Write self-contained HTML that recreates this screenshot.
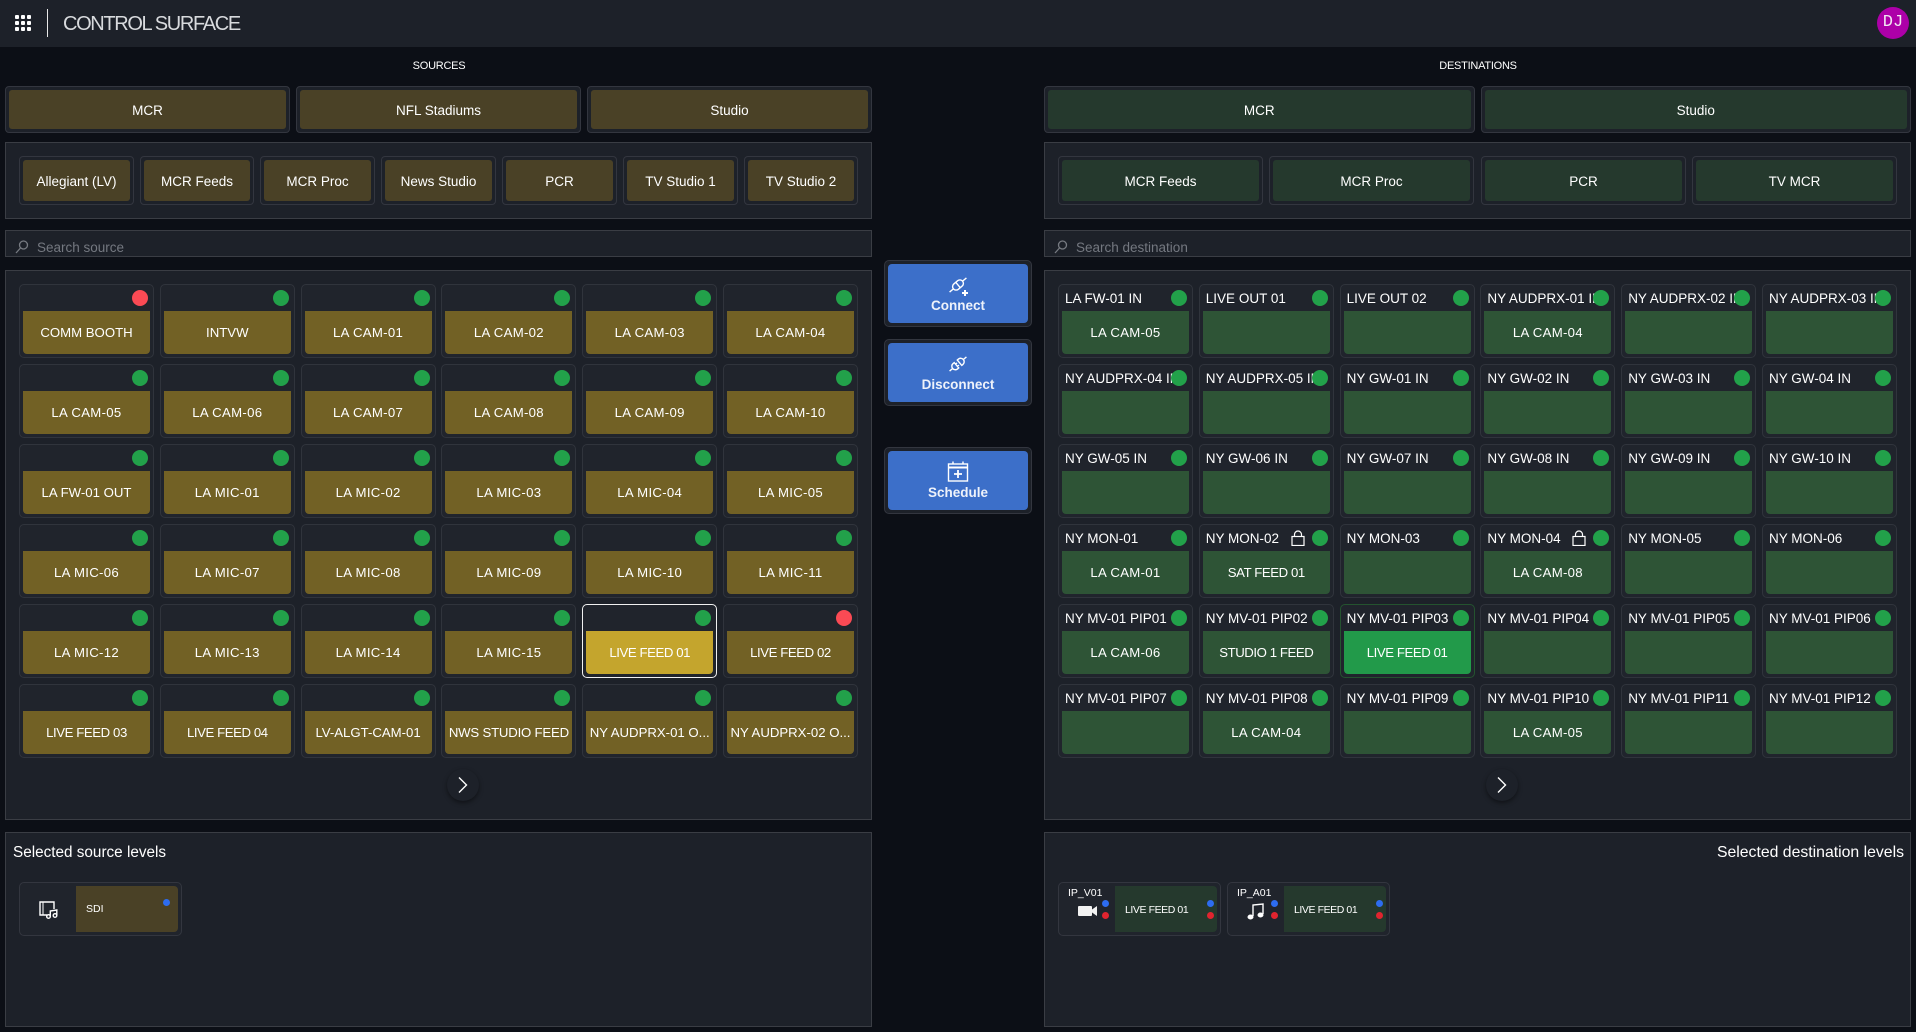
<!DOCTYPE html>
<html><head><meta charset="utf-8"><title>Control Surface</title>
<style>
*{box-sizing:border-box;margin:0;padding:0}
html,body{width:1916px;height:1032px;overflow:hidden;background:#0c0f16;color:#fff;font:13.5px "Liberation Sans",sans-serif}
.a{position:absolute}
.hd{left:0;top:0;width:1916px;height:47px;background:#1d2129}
.pn{position:absolute;background:#1d2129;border:1px solid #3a3d44}
.ttl{position:absolute;top:60px;font-size:11px;letter-spacing:-.25px;text-align:center}
.tab{position:absolute;border:1px solid #33363f;border-radius:4px;padding:3px;background:#1d2129}
.tab span{display:flex;width:100%;height:100%;align-items:center;justify-content:center;border-radius:3px;font-size:13.5px;white-space:nowrap;padding-top:2px}
.g span{background:#4a4126}.d span{background:#25392d}
.sr{position:absolute;left:31px;top:9px;font-size:13.5px;color:#747880}
.grid{position:absolute;top:284px;display:grid;grid-template-columns:repeat(6,135px);grid-auto-rows:74px;column-gap:5.8px;row-gap:6px}
.c{position:relative;background:#20242c;border:1px solid #30343c;border-radius:5px}
.c i{position:absolute;right:5px;top:5px;width:16px;height:16px;border-radius:50%;background:#22a14a}
.c i.r{background:#fa4a54}
.c b{position:absolute;left:3px;right:3px;top:26px;height:43px;font-weight:400;display:flex;align-items:center;justify-content:center;border-radius:0 0 4px 4px;white-space:nowrap;font-size:13.2px;letter-spacing:.3px;overflow:hidden}
.c b.n{letter-spacing:-.42px}.c b.z{letter-spacing:0}
.s b{background:#726125}
.t b{background:#2e5436}
.c u{position:absolute;left:6px;top:0;height:27px;width:113px;line-height:27px;text-decoration:none;overflow:hidden;white-space:nowrap;font-size:13.5px}
.c.sel{border:1px solid #f0f0f0}.c.sel b{background:#c4a52d}
.c.act{border-color:#24532f}.c.act b{background:#229a4a}
.lk{position:absolute;left:91px;top:5px}
.bt{position:absolute;left:884px;width:148px;height:67px;border:1px solid #33363f;border-radius:5px;background:#1d2129;padding:3px}
.bt div{position:relative;width:100%;height:100%;background:#3c6fc9;border-radius:4px;text-align:center;font-weight:700;font-size:13.5px;color:#eef2fa}
.bt svg{position:absolute;left:50%;transform:translateX(-50%);top:11px}
.bt p{position:absolute;left:0;right:0;top:34px}
.ch{position:absolute;top:769px;width:32px;height:32px;border-radius:50%;background:#1d2129;box-shadow:0 2px 5px rgba(0,0,0,.45)}
.lv{position:absolute;border:1px solid #33363f;border-radius:5px;background:#20242c;top:882px;height:54px;width:163px}
.lv .f{position:absolute;top:3px;bottom:3px;right:3px;border-radius:0 4px 4px 0}
.lv .f em{position:absolute;font-style:normal;font-size:10.5px;letter-spacing:-.42px;white-space:nowrap}
.dt{position:absolute;width:7px;height:7px;border-radius:50%}
.bl{background:#2d6cf0}.rd{background:#e0242f}
</style></head><body>
<div class="a hd"></div>
<svg class="a" style="left:14px;top:14px" width="18" height="18" fill="#fff"><rect x="1" y="1" width="4" height="4" rx="1"/><rect x="7" y="1" width="4" height="4" rx="1"/><rect x="13" y="1" width="4" height="4" rx="1"/><rect x="1" y="7" width="4" height="4" rx="1"/><rect x="7" y="7" width="4" height="4" rx="1"/><rect x="13" y="7" width="4" height="4" rx="1"/><rect x="1" y="13" width="4" height="4" rx="1"/><rect x="7" y="13" width="4" height="4" rx="1"/><rect x="13" y="13" width="4" height="4" rx="1"/></svg>
<div class="a" style="left:47px;top:9px;width:1px;height:28px;background:#e8e8e8"></div>
<div class="a" style="left:63px;top:12px;font-size:20px;letter-spacing:-1.35px;line-height:25px;color:#d8dadd;white-space:nowrap">CONTROL SURFACE</div>
<div class="a" style="left:1877px;top:7px;width:32px;height:32px;border-radius:50%;background:#ad00a8;color:#f2e6f2;font:17px/32px 'Liberation Mono',monospace;text-align:center">DJ</div>

<div class="ttl" style="left:389px;width:100px">SOURCES</div>
<div class="ttl" style="left:1428px;width:100px">DESTINATIONS</div>

<div class="tab g" style="left:5px;top:86px;width:285px;height:47px"><span>MCR</span></div>
<div class="tab g" style="left:296px;top:86px;width:285px;height:47px"><span>NFL Stadiums</span></div>
<div class="tab g" style="left:587px;top:86px;width:285px;height:47px"><span>Studio</span></div>
<div class="tab d" style="left:1044px;top:86px;width:430.5px;height:47px"><span>MCR</span></div>
<div class="tab d" style="left:1480.5px;top:86px;width:430.5px;height:47px"><span>Studio</span></div>

<div class="pn" style="left:5px;top:142px;width:867px;height:77px"></div>
<div class="pn" style="left:1044px;top:142px;width:867px;height:77px"></div>
<div class="tab g" style="left:19px;top:156px;width:115px;height:49px"><span>Allegiant (LV)</span></div>
<div class="tab g" style="left:140px;top:156px;width:114px;height:49px"><span>MCR Feeds</span></div>
<div class="tab g" style="left:260px;top:156px;width:115px;height:49px"><span>MCR Proc</span></div>
<div class="tab g" style="left:381px;top:156px;width:115px;height:49px"><span>News Studio</span></div>
<div class="tab g" style="left:502px;top:156px;width:115px;height:49px"><span>PCR</span></div>
<div class="tab g" style="left:623px;top:156px;width:115px;height:49px"><span>TV Studio 1</span></div>
<div class="tab g" style="left:744px;top:156px;width:114px;height:49px"><span>TV Studio 2</span></div>
<div class="tab d" style="left:1058px;top:156px;width:205px;height:49px"><span>MCR Feeds</span></div>
<div class="tab d" style="left:1269px;top:156px;width:205px;height:49px"><span>MCR Proc</span></div>
<div class="tab d" style="left:1481px;top:156px;width:205px;height:49px"><span>PCR</span></div>
<div class="tab d" style="left:1692px;top:156px;width:205px;height:49px"><span>TV MCR</span></div>

<div class="pn" style="left:5px;top:230px;width:867px;height:27px"><svg class="a" style="left:9px;top:9px" width="14" height="14" fill="none" stroke="#777b82" stroke-width="1.3"><circle cx="8.5" cy="5" r="4"/><path d="M5.5 8 1 13"/></svg><span class="sr">Search source</span></div>
<div class="pn" style="left:1044px;top:230px;width:867px;height:27px"><svg class="a" style="left:9px;top:9px" width="14" height="14" fill="none" stroke="#777b82" stroke-width="1.3"><circle cx="8.5" cy="5" r="4"/><path d="M5.5 8 1 13"/></svg><span class="sr">Search destination</span></div>

<div class="pn" style="left:5px;top:270px;width:867px;height:550px"></div>
<div class="pn" style="left:1044px;top:270px;width:867px;height:550px"></div>

<div class="grid" style="left:19px">
<div class="c s"><i class="r"></i><b class="z">COMM BOOTH</b></div><div class="c s"><i></i><b class="z">INTVW</b></div><div class="c s"><i></i><b>LA CAM-01</b></div><div class="c s"><i></i><b>LA CAM-02</b></div><div class="c s"><i></i><b>LA CAM-03</b></div><div class="c s"><i></i><b>LA CAM-04</b></div>
<div class="c s"><i></i><b>LA CAM-05</b></div><div class="c s"><i></i><b>LA CAM-06</b></div><div class="c s"><i></i><b>LA CAM-07</b></div><div class="c s"><i></i><b>LA CAM-08</b></div><div class="c s"><i></i><b>LA CAM-09</b></div><div class="c s"><i></i><b>LA CAM-10</b></div>
<div class="c s"><i></i><b class="z">LA FW-01 OUT</b></div><div class="c s"><i></i><b>LA MIC-01</b></div><div class="c s"><i></i><b>LA MIC-02</b></div><div class="c s"><i></i><b>LA MIC-03</b></div><div class="c s"><i></i><b>LA MIC-04</b></div><div class="c s"><i></i><b>LA MIC-05</b></div>
<div class="c s"><i></i><b>LA MIC-06</b></div><div class="c s"><i></i><b>LA MIC-07</b></div><div class="c s"><i></i><b>LA MIC-08</b></div><div class="c s"><i></i><b>LA MIC-09</b></div><div class="c s"><i></i><b>LA MIC-10</b></div><div class="c s"><i></i><b>LA MIC-11</b></div>
<div class="c s"><i></i><b>LA MIC-12</b></div><div class="c s"><i></i><b>LA MIC-13</b></div><div class="c s"><i></i><b>LA MIC-14</b></div><div class="c s"><i></i><b>LA MIC-15</b></div><div class="c s sel"><i></i><b class="n">LIVE FEED 01</b></div><div class="c s"><i class="r"></i><b class="n">LIVE FEED 02</b></div>
<div class="c s"><i></i><b class="n">LIVE FEED 03</b></div><div class="c s"><i></i><b class="n">LIVE FEED 04</b></div><div class="c s"><i></i><b class="z">LV-ALGT-CAM-01</b></div><div class="c s"><i></i><b class="z" style="letter-spacing:-.2px">NWS STUDIO FEED</b></div><div class="c s"><i></i><b class="z">NY AUDPRX-01 O...</b></div><div class="c s"><i></i><b class="z">NY AUDPRX-02 O...</b></div>
</div>

<div class="grid" style="left:1058px">
<div class="c t"><u>LA FW-01 IN</u><i></i><b>LA CAM-05</b></div><div class="c t"><u>LIVE OUT 01</u><i></i><b></b></div><div class="c t"><u>LIVE OUT 02</u><i></i><b></b></div><div class="c t"><u>NY AUDPRX-01 IN</u><i></i><b>LA CAM-04</b></div><div class="c t"><u>NY AUDPRX-02 IN</u><i></i><b></b></div><div class="c t"><u>NY AUDPRX-03 IN</u><i></i><b></b></div>
<div class="c t"><u>NY AUDPRX-04 IN</u><i></i><b></b></div><div class="c t"><u>NY AUDPRX-05 IN</u><i></i><b></b></div><div class="c t"><u>NY GW-01 IN</u><i></i><b></b></div><div class="c t"><u>NY GW-02 IN</u><i></i><b></b></div><div class="c t"><u>NY GW-03 IN</u><i></i><b></b></div><div class="c t"><u>NY GW-04 IN</u><i></i><b></b></div>
<div class="c t"><u>NY GW-05 IN</u><i></i><b></b></div><div class="c t"><u>NY GW-06 IN</u><i></i><b></b></div><div class="c t"><u>NY GW-07 IN</u><i></i><b></b></div><div class="c t"><u>NY GW-08 IN</u><i></i><b></b></div><div class="c t"><u>NY GW-09 IN</u><i></i><b></b></div><div class="c t"><u>NY GW-10 IN</u><i></i><b></b></div>
<div class="c t"><u>NY MON-01</u><i></i><b>LA CAM-01</b></div><div class="c t"><u>NY MON-02</u><svg class="lk" width="14" height="16" fill="none" stroke="#fff" stroke-width="1.2"><rect x="1" y="6.500" width="12" height="9"/><path d="M3.500 6.500V4.500a3.500 3.500 0 0 1 7 0V6.500"/></svg><i></i><b class="n">SAT FEED 01</b></div><div class="c t"><u>NY MON-03</u><i></i><b></b></div><div class="c t"><u>NY MON-04</u><svg class="lk" width="14" height="16" fill="none" stroke="#fff" stroke-width="1.2"><rect x="1" y="6.500" width="12" height="9"/><path d="M3.500 6.500V4.500a3.500 3.500 0 0 1 7 0V6.500"/></svg><i></i><b>LA CAM-08</b></div><div class="c t"><u>NY MON-05</u><i></i><b></b></div><div class="c t"><u>NY MON-06</u><i></i><b></b></div>
<div class="c t"><u>NY MV-01 PIP01</u><i></i><b>LA CAM-06</b></div><div class="c t"><u>NY MV-01 PIP02</u><i></i><b class="n">STUDIO 1 FEED</b></div><div class="c t act"><u>NY MV-01 PIP03</u><i></i><b class="n">LIVE FEED 01</b></div><div class="c t"><u>NY MV-01 PIP04</u><i></i><b></b></div><div class="c t"><u>NY MV-01 PIP05</u><i></i><b></b></div><div class="c t"><u>NY MV-01 PIP06</u><i></i><b></b></div>
<div class="c t"><u>NY MV-01 PIP07</u><i></i><b></b></div><div class="c t"><u>NY MV-01 PIP08</u><i></i><b>LA CAM-04</b></div><div class="c t"><u>NY MV-01 PIP09</u><i></i><b></b></div><div class="c t"><u>NY MV-01 PIP10</u><i></i><b>LA CAM-05</b></div><div class="c t"><u>NY MV-01 PIP11</u><i></i><b></b></div><div class="c t"><u>NY MV-01 PIP12</u><i></i><b></b></div>
</div>

<div class="ch" style="left:447px"><svg width="32" height="32" fill="none" stroke="#fff" stroke-width="1.4"><path d="M12 8.500 19.500 16 12 23.500"/></svg></div>
<div class="ch" style="left:1486px"><svg width="32" height="32" fill="none" stroke="#fff" stroke-width="1.4"><path d="M12 8.500 19.500 16 12 23.500"/></svg></div>

<div class="bt" style="top:260px"><div><svg width="24" height="22" viewBox="0 0 24 22" fill="none" stroke="#fff" stroke-width="1.4"><g transform="rotate(-40 12 10)"><rect x="6" y="6.500" width="12" height="7" rx="3.500"/><path d="M12 6.500v7M1 10h5M18 10h5"/></g><path d="M19 15v6M16 18h6" stroke-width="2"/></svg><p>Connect</p></div></div>
<div class="bt" style="top:339px"><div><svg width="24" height="22" viewBox="0 0 24 22" fill="none" stroke="#fff" stroke-width="1.4"><g transform="rotate(-40 12 10)"><path d="M10 6.500H8.500a3.500 3.500 0 0 0 0 7H10zM5 10H1M10 8.500h2M10 11.500h2"/><path d="M14 6.500h1.500a3.500 3.500 0 0 1 0 7H14zM19 10h4"/></g></svg><p>Disconnect</p></div></div>
<div class="bt" style="top:447px"><div><svg style="top:10px" width="22" height="22" viewBox="0 0 22 22" fill="none" stroke="#fff" stroke-width="1.4"><rect x="1.500" y="3" width="19" height="17"/><path d="M1.500 6.500h19" stroke-width="2"/><path d="M6 .5v3M16 .5v3"/><path d="M11 9v8M7 13h8" stroke-width="1.800"/></svg><p>Schedule</p></div></div>

<div class="pn" style="left:5px;top:832px;width:867px;height:195px"></div>
<div class="pn" style="left:1044px;top:832px;width:867px;height:195px"></div>
<div class="a" style="left:13px;top:843px;font-size:15.3px;line-height:20px;white-space:nowrap">Selected source levels</div>
<div class="a" style="right:12px;top:843px;font-size:15.8px;line-height:20px;white-space:nowrap">Selected destination levels</div>

<div class="lv" style="left:19px"><svg class="a" style="left:19px;top:17px" width="22" height="20" fill="none" stroke="#fff" stroke-width="1.400"><path d="M8 15H1V2h14v7"/><path d="M4 2v13" stroke-width="1"/><circle cx="9.500" cy="16.500" r="1.800"/><circle cx="16" cy="15.500" r="1.800"/><path d="M11.300 16.500v-5.500l6.500-1v5.500"/></svg><div class="f" style="left:56px;right:3px;background:#4a4126"><em style="left:10px;top:17px;letter-spacing:0">SDI</em><span class="dt bl" style="left:87px;top:13px"></span></div></div>

<div class="lv" style="left:1058px"><em class="a" style="left:9px;top:4px;font-style:normal;font-size:10.500px">IP_V01</em><svg class="a" style="left:19px;top:22px" width="20" height="12" fill="#f2f2f2"><rect x="0" y="1" width="14" height="10" rx="1"/><path d="M14 4.500 19 1v10l-5-3.500z"/></svg><span class="dt bl" style="left:43px;top:17px"></span><span class="dt rd" style="left:43px;top:29px"></span><div class="f" style="left:56px;background:#25392d"><em style="left:10px;top:18px">LIVE FEED 01</em><span class="dt bl" style="left:92px;top:14px"></span><span class="dt rd" style="left:92px;top:26px"></span></div></div>

<div class="lv" style="left:1227px"><em class="a" style="left:9px;top:4px;font-style:normal;font-size:10.500px">IP_A01</em><svg class="a" style="left:19px;top:19px" width="18" height="18" fill="#fff" stroke="#fff"><path d="M6 14V3l10-1v10" fill="none" stroke-width="1.400"/><ellipse cx="3.500" cy="15" rx="2.500" ry="2"/><ellipse cx="13.500" cy="13" rx="2.500" ry="2"/></svg><span class="dt bl" style="left:43px;top:17px"></span><span class="dt rd" style="left:43px;top:29px"></span><div class="f" style="left:56px;background:#25392d"><em style="left:10px;top:18px">LIVE FEED 01</em><span class="dt bl" style="left:92px;top:14px"></span><span class="dt rd" style="left:92px;top:26px"></span></div></div>
</body></html>
